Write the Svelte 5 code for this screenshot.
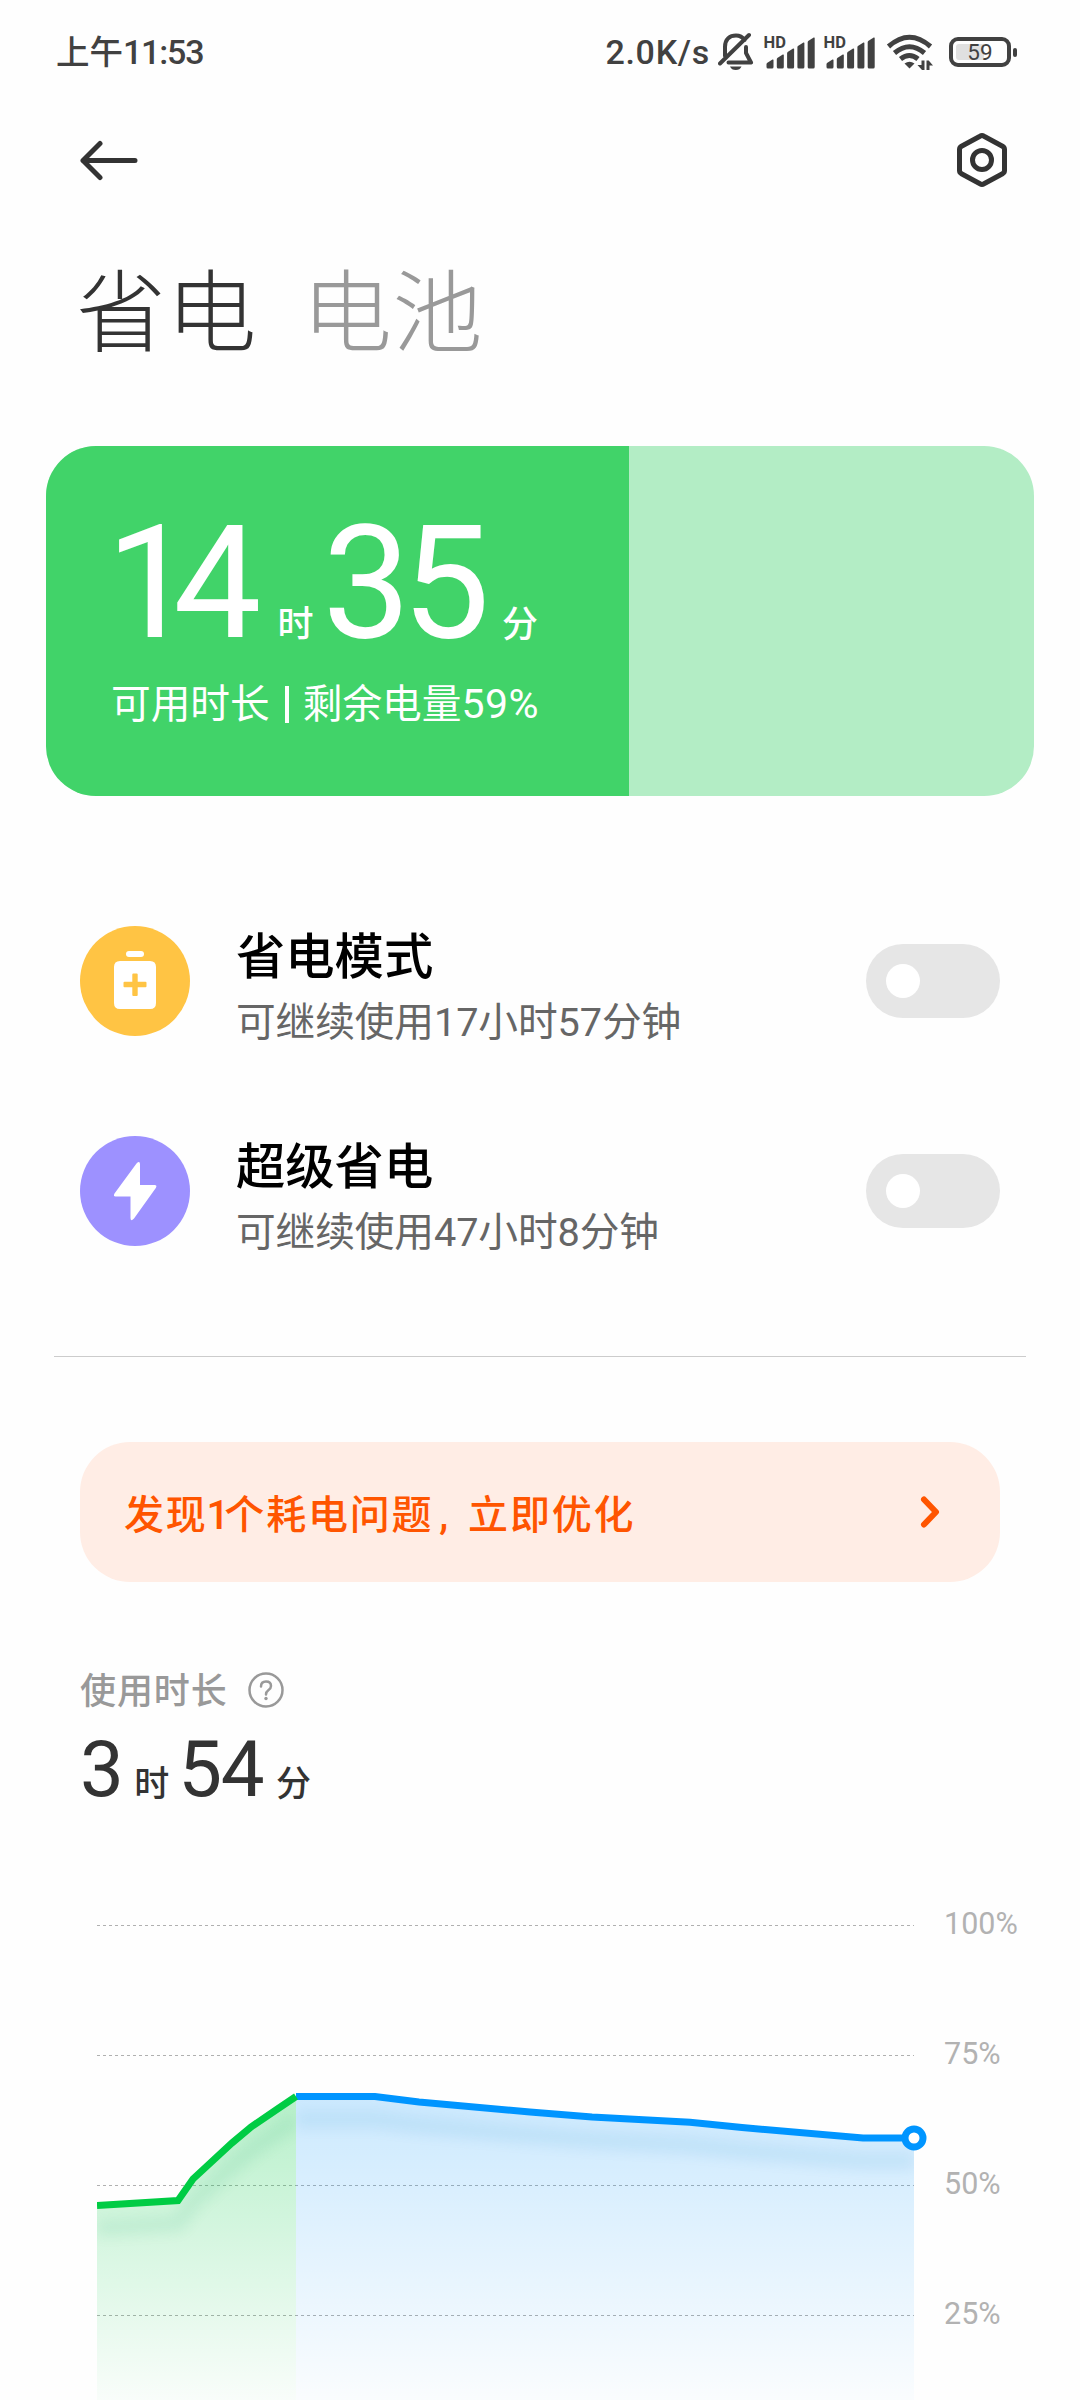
<script>
	const level = 59;

	let modes = $state([
		{ id: 'saver', title: '省电模式', detail: '可继续使用17小时57分钟', on: false },
		{ id: 'ultra', title: '超级省电', detail: '可继续使用47小时8分钟', on: false }
	]);

	const signalBars = [8, 13, 19, 25, 30];
	const gridLabels = ['100%', '75%', '50%', '25%'];

	// chart units: x in px from the left edge of the plot, y in px from the 100% line
	const charging = [
		[0, 280.5],
		[81, 275.5],
		[96, 254],
		[135, 218],
		[154, 202],
		[179, 185],
		[199, 171.5]
	];
	const draining = [
		[199, 171.5],
		[278, 171.5],
		[322, 177],
		[433, 187],
		[495, 192],
		[593, 197.3],
		[645, 202.5],
		[766, 213],
		[817, 213]
	];

	const toLine = (points) => 'M' + points.map(([x, y]) => `${x} ${y}`).join('L');
	const toArea = (points) => `${toLine(points)}V520H${points[0][0]}Z`;
</script>

{#snippet signal()}
	<svg class="signal" width="52" height="34" viewBox="0 0 52 34">
		<text class="signal__hd" x="-1.500" y="13">HD</text>
		{#each signalBars as h, i}
			<path d="M{2 + i * 10.3} {36 - h}l5.5 -3.500q1 -.4 1 .6V32q0 1.500 -1.500 1.500h-4q-1.500 0 -1.500 -1.500V{37 - h}z" />
		{/each}
	</svg>
{/snippet}

<main class="screen">
	<header class="status">
		<span class="status__time">上午<span class="status__digits">11:53</span></span>
		<div class="status__right">
			<span class="status__speed">2.0K/s</span>
			<svg class="status__bell" width="36" height="40" viewBox="0 0 36 40">
				<path
					class="status__stroke"
					d="M7 24V15C7 7 12 3.500 18 3.500C22 3.500 24.500 5 26.500 8M28 15V21L33 30.500H10.500M31 3L2 31.500"
				/>
				<path d="M12 34.500H23.500Q22 38 17.750 38Q13.500 38 12 34.500Z" />
			</svg>
			{@render signal()}
			{@render signal()}
			<svg class="status__wifi" width="48" height="36" viewBox="0 0 48 36">
				<g class="status__arc">
					<path d="M2.500 12.500Q23.500 -6 44.500 12.500" />
					<path d="M8.500 19Q23.500 6.500 38.500 19" />
					<path d="M14.500 25Q23.500 18 32 25" />
				</g>
				<path d="M18.500 29.500Q23.500 26 28.500 29.500L23.500 34.500Z" />
				<path d="M35.500 26.500h3V36h-2.500l-4.500 -5h4zM40.500 36V26.500h2.200l4.300 5h-3.500V36z" />
			</svg>
			<div class="battery">
				<div class="battery__shell">
					<div class="battery__track">
						<div class="battery__fill" style="width: {level}%"></div>
					</div>
					<span class="battery__text">{level}</span>
				</div>
				<div class="battery__tip"></div>
			</div>
		</div>
	</header>

	<nav class="toolbar">
		<button class="icon-button" aria-label="返回">
			<svg width="60" height="44" viewBox="0 0 60 44">
				<path d="M3 22.500H55M20 5.500L3 22.500L20 39.500" />
			</svg>
		</button>
		<button class="icon-button" aria-label="设置">
			<svg width="52" height="56" viewBox="0 0 52 56">
				<path
					d="M24 4.200Q26 3 28 4.200L46.500 14.300Q48.500 15.400 48.500 17.500V38.500Q48.500 40.600 46.500 41.700L28 51.800Q26 53 24 51.800L5.500 41.700Q3.500 40.600 3.500 38.500V17.500Q3.500 15.400 5.500 14.300Z"
				/>
				<circle cx="26" cy="28" r="9.500" />
			</svg>
		</button>
	</nav>

	<div class="tabs">
		<h1 class="tabs__item tabs__item--active">省电</h1>
		<h1 class="tabs__item">电池</h1>
	</div>

	<section class="hero">
		<div class="hero__fill" style="width: {level}%">
			<p class="hero__time">
				<span class="hero__number hero__number--hours">14</span><span class="hero__unit">时</span><span
					class="hero__number">35</span
				><span class="hero__unit hero__unit--last">分</span>
			</p>
			<p class="hero__caption">
				<span>可用时长</span><i class="hero__bar"></i><span
					>剩余电量<span class="hero__percent">{level}%</span></span
				>
			</p>
		</div>
	</section>

	<section class="modes">
		{#each modes as mode (mode.id)}
			<div class="mode">
				<div class="mode__icon mode__icon--{mode.id}">
					{#if mode.id === 'saver'}
						<svg width="110" height="110" viewBox="0 0 110 110">
							<rect x="46" y="25" width="18" height="6" rx="3" />
							<path
								fill-rule="evenodd"
								d="M40 35H70Q76 35 76 41V77Q76 83 70 83H40Q34 83 34 77V41Q34 35 40 35ZM52.300 48.500V55.800H44.500Q43.500 55.800 43.500 56.800V60.200Q43.500 61.200 44.500 61.200H52.300V69Q52.300 70 53.300 70H56.700Q57.700 70 57.700 69V61.200H65.500Q66.500 61.200 66.500 60.200V56.800Q66.500 55.800 65.500 55.800H57.700V48.500Q57.700 47.500 56.700 47.500H53.300Q52.300 47.500 52.300 48.500Z"
							/>
						</svg>
					{:else}
						<svg width="110" height="110" viewBox="0 0 110 110">
							<path
								d="M56.500 27.500Q59.800 24.500 60 28V49H74.500Q77.500 49 75.800 52L54 82.500Q50.500 86 50.500 82V60.500H35.500Q33 60.500 34.500 57.500Z"
							/>
						</svg>
					{/if}
				</div>
				<div class="mode__text">
					<h2 class="mode__title">{mode.title}</h2>
					<p class="mode__detail">{mode.detail}</p>
				</div>
				<button
					class="toggle"
					class:toggle--on={mode.on}
					role="switch"
					aria-checked={mode.on}
					aria-label={mode.title}
					onclick={() => (mode.on = !mode.on)}
				>
					<span class="toggle__knob"></span>
				</button>
			</div>
		{/each}
	</section>

	<hr class="divider" />

	<button class="notice">
		<span class="notice__text"
			>发现<span class="notice__count">1</span>个耗电问题<span class="notice__comma">,</span
			>立即优化</span
		>
		<svg width="24" height="36" viewBox="0 0 24 36">
			<path d="M6 5.500L18 18L6 30.500" />
		</svg>
	</button>

	<section class="usage">
		<div class="usage__label">
			<span class="usage__name">使用时长</span>
			<svg width="36" height="36" viewBox="0 0 36 36">
				<circle cx="18" cy="18" r="16.500" />
				<path d="M13 14.500Q13 9.500 18 9.500Q23 9.500 23 14Q23 16.500 20.300 18.300Q18 20 18 22.500" />
				<circle class="usage__dot" cx="18" cy="26.500" r="1.700" />
			</svg>
		</div>
		<p class="usage__time">
			<span class="usage__number">3</span><span class="usage__unit">时</span><span
				class="usage__number">54</span
			><span class="usage__unit usage__unit--last">分</span>
		</p>
	</section>

	<section class="chart">
		<svg class="chart__plot" width="847" height="500" viewBox="0 -25 847 500">
			<defs>
				<linearGradient id="green-area" gradientUnits="userSpaceOnUse" x1="0" y1="171" x2="0" y2="500">
					<stop offset="0" stop-color="#00cc44" stop-opacity="0.28" />
					<stop offset="1" stop-color="#00cc44" stop-opacity="0" />
				</linearGradient>
				<linearGradient id="blue-area" gradientUnits="userSpaceOnUse" x1="0" y1="171" x2="0" y2="500">
					<stop offset="0" stop-color="#0095ff" stop-opacity="0.2" />
					<stop offset="1" stop-color="#0095ff" stop-opacity="0" />
				</linearGradient>
				<filter id="soft" x="-10%" y="-60%" width="120%" height="260%">
					<feGaussianBlur stdDeviation="7" />
				</filter>
				<clipPath id="green-clip"><path d={toArea(charging)} /></clipPath>
				<clipPath id="blue-clip"><path d={toArea(draining)} /></clipPath>
			</defs>
			{#each gridLabels as _, i}
				<path class="chart__grid" d="M0 {i * 130 + 0.5}H817" />
			{/each}
			<path d={toArea(draining)} fill="url(#blue-area)" />
			<path d={toArea(charging)} fill="url(#green-area)" />
			<g clip-path="url(#blue-clip)">
				<path class="chart__shadow chart__shadow--blue" d={toLine(draining)} />
			</g>
			<g clip-path="url(#green-clip)">
				<path class="chart__shadow chart__shadow--green" d={toLine(charging)} />
			</g>
			<path class="chart__line chart__line--blue" d={toLine(draining)} />
			<path class="chart__line chart__line--green" d={toLine(charging)} />
			<circle class="chart__marker" cx="817" cy="213" r="9" />
		</svg>
		<div class="chart__labels">
			{#each gridLabels as label}
				<span>{label}</span>
			{/each}
		</div>
	</section>
</main>

<style>
	:global(body) {
		background: #fefefe;
	}

	.screen {
		width: 1080px;
		height: 2400px;
		overflow: hidden;
		background: #fefefe;
		color: #333;
		font-family: Roboto, 'Noto Sans CJK SC', sans-serif;
	}

	p,
	h1,
	h2 {
		margin: 0;
	}

	button {
		border: none;
		padding: 0;
		background: none;
		font: inherit;
		cursor: pointer;
	}

	svg {
		display: block;
		flex-shrink: 0;
	}

	.status {
		height: 100px;
		padding: 4px 63px 0 56px;
		box-sizing: border-box;
		display: flex;
		align-items: center;
		justify-content: space-between;
		color: #414141;
		fill: #414141;
	}

	.status__time {
		font-size: 33.5px;
		font-weight: 500;
		line-height: 44px;
	}

	.status__digits {
		font-size: 34px;
		letter-spacing: -1.2px;
	}

	.status__right {
		display: flex;
		align-items: center;
	}

	.status__speed {
		font-size: 34px;
		font-weight: 500;
		line-height: 44px;
		letter-spacing: 0.7px;
		margin-right: 8px;
	}

	.status__bell {
		margin-right: 11px;
	}

	.status__stroke {
		fill: none;
		stroke: #414141;
		stroke-width: 4;
		stroke-linecap: round;
		stroke-linejoin: round;
	}

	.signal {
		margin-right: 8px;
		overflow: visible;
	}

	.signal__hd {
		font-size: 16.5px;
		font-weight: 700;
	}

	.status__wifi {
		margin: 0 15px 0 1px;
	}

	.status__arc {
		fill: none;
		stroke: #414141;
		stroke-width: 5;
	}

	.battery {
		display: flex;
		align-items: center;
		gap: 2px;
	}

	.battery__shell {
		position: relative;
		width: 62px;
		height: 30px;
		box-sizing: border-box;
		border: 4px solid #414141;
		border-radius: 9px;
		padding: 3px;
	}

	.battery__track {
		height: 100%;
		border-radius: 3px;
		overflow: hidden;
	}

	.battery__fill {
		height: 100%;
		background: #e0e0e0;
	}

	.battery__text {
		position: absolute;
		inset: 0;
		font-size: 22.5px;
		line-height: 23px;
		text-align: center;
	}

	.battery__tip {
		width: 4px;
		height: 9px;
		border-radius: 2px;
		background: #414141;
	}

	.toolbar {
		height: 120px;
		padding: 0 72px 0 80px;
		display: flex;
		align-items: center;
		justify-content: space-between;
	}

	.icon-button svg {
		fill: none;
		stroke: #333;
		stroke-width: 5;
		stroke-linecap: round;
		stroke-linejoin: round;
	}

	.tabs {
		height: 226px;
		padding: 0 76px;
		box-sizing: border-box;
		display: flex;
		gap: 45px;
	}

	.tabs__item {
		font-size: 90px;
		font-weight: 300;
		line-height: 189px;
		letter-spacing: 0.5px;
		color: #999;
	}

	.tabs__item--active {
		color: #333;
	}

	.hero {
		height: 350px;
		margin: 0 46px;
		border-radius: 50px;
		overflow: hidden;
		background: #b3edc5;
		color: #fff;
	}

	.hero__fill {
		height: 100%;
		box-sizing: border-box;
		padding: 57px 0 0 65px;
		background: #41d369;
		white-space: nowrap;
	}

	.hero__time {
		height: 160px;
		margin-left: -5px;
		line-height: 160px;
	}

	.hero__number {
		font-size: 157px;
		letter-spacing: -9px;
	}

	.hero__number--hours {
		letter-spacing: -21px;
	}

	.hero__unit {
		font-size: 36px;
		font-weight: 500;
		margin: 0 9px 0 37px;
	}

	.hero__unit--last {
		margin: 0 0 0 21px;
	}

	.hero__caption {
		display: flex;
		align-items: center;
		margin-top: 17px;
		font-size: 39.7px;
		line-height: 48px;
	}

	.hero__percent {
		font-size: 41px;
		letter-spacing: 0.4px;
	}

	.hero__bar {
		width: 4px;
		height: 37px;
		margin: 0 14px 0 15px;
		background: #fff;
	}

	.modes {
		padding: 80px 80px 0;
	}

	.mode {
		height: 210px;
		display: flex;
		align-items: center;
	}

	.mode__icon {
		border-radius: 50%;
		fill: #fff;
	}

	.mode__icon--saver {
		background: #ffc444;
	}

	.mode__icon--ultra {
		background: #9d91ff;
	}

	.mode__text {
		flex: 1;
		margin-left: 46px;
		padding-top: 18px;
	}

	.mode__title {
		font-size: 49.3px;
		font-weight: 500;
		line-height: 66px;
		color: #000;
	}

	.mode__detail {
		font-size: 39.7px;
		line-height: 66px;
		letter-spacing: -0.1px;
		color: #666;
	}

	.toggle {
		width: 134px;
		height: 74px;
		padding: 20px;
		border-radius: 37px;
		background: #e6e6e6;
		display: flex;
	}

	.toggle--on {
		justify-content: flex-end;
		background: #0095ff;
	}

	.toggle__knob {
		width: 34px;
		height: 34px;
		border-radius: 50%;
		background: #fff;
	}

	.divider {
		height: 1px;
		margin: 60px 54px 0;
		border: none;
		background: #ccc;
	}

	.notice {
		width: 920px;
		height: 140px;
		margin: 85px 80px 0;
		padding: 0 58px 0 44px;
		border-radius: 50px;
		background: #ffede5;
		color: #ff5500;
		display: flex;
		align-items: center;
		justify-content: space-between;
	}

	.notice__text {
		font-size: 40px;
		font-weight: 500;
		letter-spacing: 1.8px;
	}

	.notice__count {
		letter-spacing: -5px;
		margin-left: -1px;
	}

	.notice__comma {
		margin: 0 18px 0 6px;
	}

	.notice svg {
		fill: none;
		stroke: #ff5500;
		stroke-width: 6;
		stroke-linecap: round;
		stroke-linejoin: round;
	}

	.usage {
		padding: 83px 80px 0;
	}

	.usage__label {
		height: 50px;
		display: flex;
		align-items: center;
		gap: 20px;
		font-size: 36px;
		font-weight: 500;
		letter-spacing: 0.9px;
		line-height: 50px;
		color: #999;
	}

	.usage__name {
		padding-top: 4px;
	}

	.usage__label svg {
		fill: none;
		stroke: #999;
		stroke-width: 2.5;
		stroke-linecap: round;
	}

	.usage__label .usage__dot {
		fill: #999;
		stroke: none;
	}

	.usage__time {
		height: 100px;
		margin-top: 5px;
		line-height: 100px;
	}

	.usage__number {
		font-size: 78px;
		letter-spacing: -1.5px;
	}

	.usage__unit {
		font-size: 35px;
		font-weight: 500;
		margin: 0 9px 0 12px;
	}

	.usage__unit--last {
		margin: 0 0 0 13px;
	}

	.chart {
		display: flex;
		padding: 80px 0 0 97px;
	}

	.chart__grid {
		fill: none;
		stroke: #b0b0b0;
		stroke-width: 1;
		stroke-dasharray: 3 3;
	}

	.chart__shadow {
		fill: none;
		stroke-width: 16;
		opacity: 0.09;
		filter: url(#soft);
		transform: translateY(23px);
	}

	.chart__shadow--blue {
		stroke: #0080c0;
	}

	.chart__shadow--green {
		stroke: #00a060;
	}

	.chart__line {
		fill: none;
		stroke-width: 7;
	}

	.chart__line--blue {
		stroke: #0095ff;
	}

	.chart__line--green {
		stroke: #00cc44;
	}

	.chart__marker {
		fill: #fff;
		stroke: #0095ff;
		stroke-width: 7;
	}

	.chart__labels {
		display: flex;
		flex-direction: column;
		gap: 90px;
		padding-top: 4px;
		font-size: 30.5px;
		line-height: 40px;
		color: #b2b2b2;
	}
</style>
